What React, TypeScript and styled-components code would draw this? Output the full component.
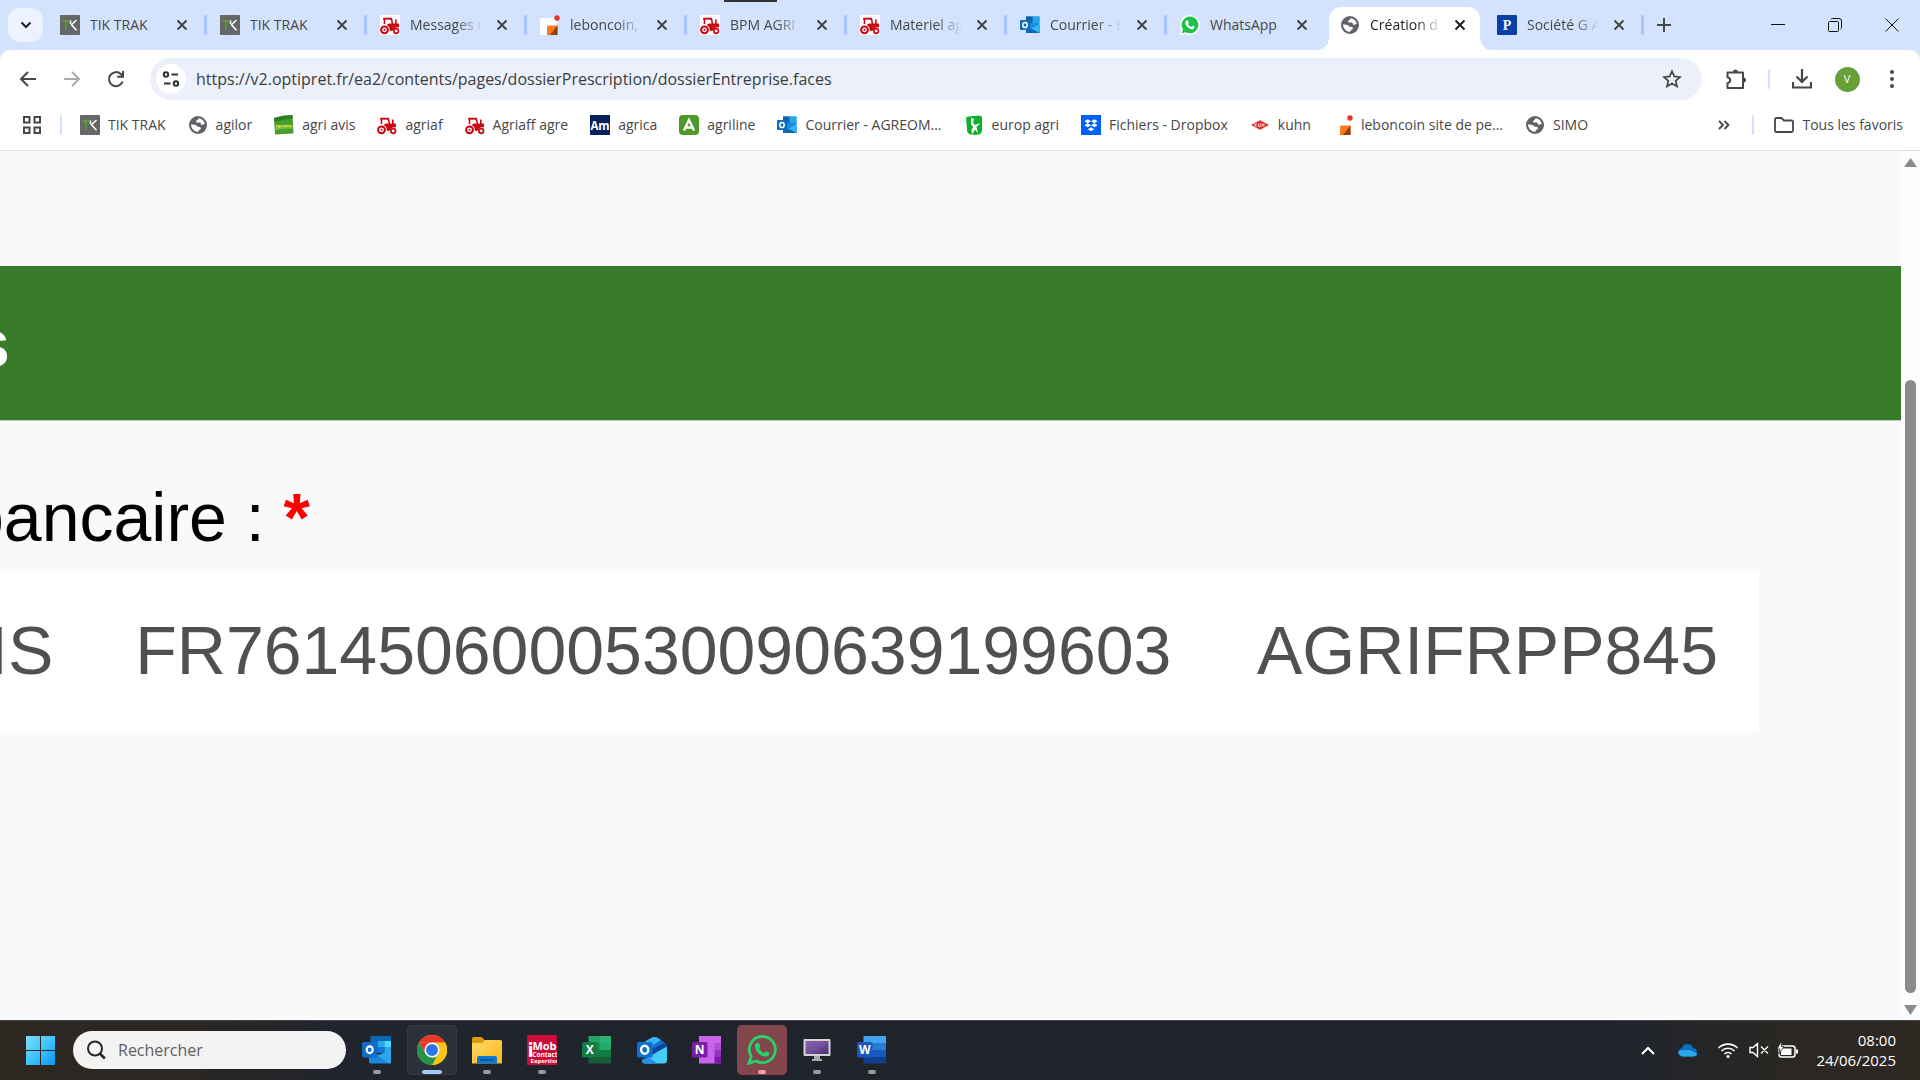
import React from "react";
import styled, { createGlobalStyle, css } from "styled-components";

const uiFont = `"Segoe UI", "Open Sans", "Noto Sans", sans-serif`;
const pageFont = `"Liberation Sans", Arial, sans-serif`;

const GlobalStyle = createGlobalStyle`
  *, *::before, *::after { box-sizing: border-box; }
  body { margin: 0; background: #d3e3fd; overflow: hidden; }
  button, input { font: inherit; color: inherit; border: 0; margin: 0; padding: 0; background: none; }
  svg { display: block; flex: none; }
`;

const Screen = styled.div`
  display: flex;
  flex-direction: column;
  min-height: 100vh;
  font-family: ${uiFont};
  font-size: 14px;
  line-height: 20px;
  color: #474747;
`;

/* ---------- Tab strip ---------- */

const TabStrip = styled.header`
  position: relative;
  display: flex;
  align-items: center;
  height: 50px;
  padding-left: 8px;
  background: #d3e3fd;
`;

const TopHandle = styled.div`
  position: absolute;
  top: 0;
  left: 724px;
  width: 53px;
  height: 2px;
  background: #333;
`;

const TabSearch = styled.button`
  display: grid;
  place-items: center;
  flex: none;
  width: 35px;
  height: 34px;
  margin-right: 4px;
  border-radius: 12px;
  background: #ecf2fe;
  color: #1f1f1f;
`;

const TabList = styled.nav`
  display: flex;
  align-items: flex-end;
  align-self: stretch;
  min-width: 0;
`;

const Tab = styled.div<{ $active?: boolean }>`
  position: relative;
  display: flex;
  align-items: center;
  flex: 0 1 160px;
  width: 160px;
  height: 50px;
  padding-left: 13px;

  ${(p) =>
    p.$active &&
    css`
      flex-basis: 151px;
      width: 151px;
      height: 43px;
      margin: 0 4px 0 2px;
      padding: 0 10px 7px 11px;
      border-radius: 12px 12px 0 0;
      background: #fff;
      color: #1f1f1f;

      &::before,
      &::after {
        content: "";
        position: absolute;
        bottom: 0;
        width: 12px;
        height: 12px;
      }
      &::before {
        right: 100%;
        background: radial-gradient(circle at 0 0, #d3e3fd 12px, #fff 12px);
      }
      &::after {
        left: 100%;
        background: radial-gradient(circle at 100% 0, #d3e3fd 12px, #fff 12px);
      }
    `}
`;

const TabTitle = styled.a<{ $fade?: boolean }>`
  flex: 0 0 72px;
  margin-left: 10px;
  overflow: hidden;
  white-space: nowrap;
  color: inherit;
  text-decoration: none;
  ${(p) =>
    p.$fade &&
    css`
      mask-image: linear-gradient(to right, #000 64%, transparent);
    `}
`;

const TabClose = styled.button`
  display: grid;
  place-items: center;
  flex: none;
  width: 20px;
  height: 20px;
  margin-left: auto;
`;

const Divider = styled.span<{ $color?: string; $gap?: number }>`
  flex: none;
  width: 2px;
  height: 20px;
  margin: 0 ${(p) => p.$gap ?? 0}px;
  border-radius: 1px;
  background: ${(p) => p.$color ?? "#a8c7fa"};
`;

const TabDivider = styled(Divider)`
  width: 3px;
  margin-left: 12px;
`;

const IconButton = styled.button<{ $w?: number; $color?: string }>`
  display: grid;
  place-items: center;
  flex: none;
  width: ${(p) => p.$w ?? 44}px;
  height: 42px;
  color: ${(p) => p.$color ?? "#474747"};
`;

const WindowControls = styled.div`
  display: flex;
  margin-left: auto;
`;

/* ---------- Toolbar ---------- */

const Toolbar = styled.div`
  display: flex;
  align-items: center;
  height: 50px;
  padding: 8px 6px 0;
  border-radius: 10px 10px 0 0;
  background: #fff;
`;

const Omnibox = styled.div`
  display: flex;
  align-items: center;
  flex: 1;
  height: 42px;
  margin: 0 12px;
  padding: 0 8px 0 6px;
  border-radius: 21px;
  background: #ebf0fa;
`;

const SiteInfo = styled.button`
  display: grid;
  place-items: center;
  flex: none;
  width: 30px;
  height: 30px;
  border-radius: 50%;
  background: #fff;
`;

const UrlInput = styled.input`
  flex: 1;
  min-width: 0;
  margin-left: 10px;
  font-size: 16px;
  line-height: 24px;
  color: #3c3d40;
  outline: 0;
`;

const Avatar = styled.span`
  display: grid;
  place-items: center;
  width: 25px;
  height: 25px;
  border-radius: 50%;
  background: #689f38;
  color: #fff;
  font-size: 11px;
  line-height: 16px;
`;

/* ---------- Bookmarks ---------- */

const BookmarkBar = styled.nav`
  display: flex;
  align-items: center;
  height: 51px;
  padding: 0 17px 0 10px;
  border-bottom: 1px solid #dcdcdc;
  background: #fff;
`;

const BookmarkList = styled.div`
  display: flex;
  gap: 22px;
  min-width: 0;
  padding-left: 12px;
`;

const Bookmark = styled.a`
  display: flex;
  align-items: center;
  gap: 8px;
  flex: none;
  color: #474747;
  text-decoration: none;
  white-space: nowrap;
`;

const BookmarkEnd = styled.div`
  display: flex;
  align-items: center;
  margin-left: auto;
`;

/* ---------- Page ---------- */

const Viewport = styled.div`
  display: flex;
  flex: 1;
  background: #f9f9f9;
`;

const Clip = styled.main`
  flex: 1;
  min-width: 0;
  overflow: hidden;
  font-family: ${pageFont};
  font-size: 68px;
  line-height: 76px;
`;

/* The page is scrolled to the right, so its left edge lies outside the view. */
const Sheet = styled.div`
  margin-left: -52px;
  padding-top: 115px;
`;

const Band = styled.h1`
  margin: 0;
  padding: 39px 24px;
  border-bottom: 1px solid #b9d2b4;
  background: #387c2b;
  color: #fff;
  font-size: inherit;
  font-weight: 700;
`;

const FieldTitle = styled.h2`
  margin: 0;
  padding: 58px 18px 16px;
  color: #000;
  font-size: inherit;
  font-weight: 400;
`;

const Required = styled.span`
  color: #f00;
  font-weight: 700;
`;

const TableWrap = styled.div`
  padding-right: 142px;
`;

const Table = styled.table`
  width: 100%;
  border-collapse: collapse;
  background: #fff;
  color: #505050;
`;

const Cell = styled.td<{ $fill?: boolean }>`
  width: ${(p) => (p.$fill ? "100%" : "auto")};
  padding: 41px 41px 44px;
  white-space: nowrap;
`;

const Scrollbar = styled.div`
  display: flex;
  flex-direction: column;
  align-items: center;
  flex: none;
  width: 19px;
  padding: 7px 0 5px;
  background: #fcfcfc;
`;

const ScrollTrack = styled.div`
  display: flex;
  flex-direction: column;
  flex: 1;
  width: 11px;
  padding: 4px 0 12px;
`;

const ScrollLead = styled.div`
  flex: 209;
`;

const ScrollThumb = styled.div`
  flex: 613;
  border-radius: 6px;
  background: #8b8b8b;
`;

/* ---------- Taskbar ---------- */

const Taskbar = styled.footer`
  display: flex;
  align-items: center;
  height: 60px;
  padding: 0 24px 1px 15px;
  border-top: 1px solid #45474a;
  background: linear-gradient(to right, #2e2721, #2a2724 10%, #20242d 18%, #1f242b 50%, #1e232d 83%, #292724 92%, #2e2722);
`;

const StartButton = styled.button`
  display: grid;
  place-items: center;
  width: 50px;
  height: 50px;
`;

const SearchBox = styled.label`
  display: flex;
  align-items: center;
  gap: 12px;
  width: 273px;
  height: 38px;
  margin: 0 6px 0 8px;
  padding-left: 14px;
  border-radius: 19px;
  background: #f3f3f3;
`;

const SearchInput = styled.input`
  flex: 1;
  min-width: 0;
  font-size: 16px;
  line-height: 24px;
  outline: 0;
  &::placeholder {
    color: #606060;
    opacity: 1;
  }
`;

const Apps = styled.div`
  display: flex;
  gap: 5px;
`;

const AppButton = styled.button<{ $state?: "focus" | "alert" }>`
  position: relative;
  display: grid;
  place-items: center;
  width: 50px;
  height: 50px;
  border-radius: 5px;
  background: ${(p) => (p.$state === "focus" ? "#2c3039" : p.$state === "alert" ? "#83464d" : "none")};
  box-shadow: ${(p) => (p.$state === "focus" ? "inset 0 0 0 1px #383b43" : "none")};
`;

const RunMark = styled.span<{ $state?: "focus" | "alert" }>`
  position: absolute;
  bottom: 1px;
  left: 50%;
  width: ${(p) => (p.$state === "focus" ? 20 : 8)}px;
  height: 4px;
  border-radius: 2px;
  transform: translateX(-50%);
  background: ${(p) => (p.$state === "focus" ? "#a3cbf8" : p.$state === "alert" ? "#ff99a4" : "#9a9b9e")};
`;

const Tray = styled.div`
  display: flex;
  align-items: center;
  margin-left: auto;
  color: #fff;
`;

const TrayButton = styled.button<{ $w: number }>`
  display: grid;
  place-items: center;
  width: ${(p) => p.$w}px;
  height: 40px;
`;

const Clock = styled.time`
  min-width: 90px;
  text-align: right;
  font-size: 15px;
  line-height: 20px;
`;

/* ---------- Icons ---------- */

const fav = { width: 20, height: 20, viewBox: "0 0 20 20" };
const task = { width: 30, height: 30, viewBox: "0 0 30 30" };
const label = { fontFamily: "Open Sans, sans-serif", fontWeight: 700, fill: "#fff", textAnchor: "middle" as const };

const TikTrak = () => (
  <svg {...fav}>
    <rect width="20" height="20" rx="1" fill="#666" />
    <path d="M2.500 6h7M6 6v9" stroke="#4caf2a" strokeWidth="1.500" fill="none" />
    <path d="M10.500 5.500v3.500M16.500 5l-5 4.800 5 5.400" stroke="#fff" strokeWidth="1.500" fill="none" />
  </svg>
);

const Globe = () => (
  <svg {...fav}>
    <circle cx="10" cy="10" r="9" fill="#5f6368" />
    <path d="M10.500 3.200c3.300.3 5.800 2.700 6.300 5.600l-2.300.9c-.8.300-1.500-.1-1.700-.8l-.4-1.400H8.800c-.8 0-1.200-.9-.6-1.500l1.600-1.300z" fill="#fff" />
    <path d="M3.100 9.200l4.400.9c1.200.2 1.500 1.600 2.600 1.700l1.800.2c1.300.2 1.400 1.900.3 2.400l-1.300.7-.6 1.700c-3.900 0-7.400-3.400-7.200-7.600z" fill="#fff" />
  </svg>
);

const Tractor = ({ plate }: { plate?: boolean }) => (
  <svg {...fav}>
    {plate && <rect width="20" height="20" fill="#fff" />}
    <g fill="none" stroke="#cc0610">
      <path d="M4.500 9V3.500h6.800l1.200 5.300" strokeWidth="1.600" />
      <circle cx="4.500" cy="14.800" r="3.400" strokeWidth="2" />
      <circle cx="16.200" cy="16" r="2.300" strokeWidth="1.700" />
    </g>
    <path d="M9 8.500h9.200c.6 0 .8.400.8.900v3.200c-3-1-5.600.4-6.200 3.200H9.700c.3-2.700-.8-4.800-3.200-5.700zM15 4.500h1.600v4H15zM3 3h9v1.600H3z" fill="#cc0610" />
    <circle cx="4.500" cy="14.800" r="1" fill="#cc0610" />
  </svg>
);

const Leboncoin = ({ plate }: { plate?: boolean }) => (
  <svg {...fav}>
    {plate && <path d="M0 3h14l3 3v14H0z" fill="#fff" />}
    <path d="M8 10.500h9.500V20H7v-8.500z" fill="#ff7a1a" />
    <path d="M17.500 10.500V20H10z" fill="#8f3d0a" />
    <circle cx="17" cy="3" r="2.700" fill="#e23325" />
  </svg>
);

const OutlookFav = () => (
  <svg {...fav}>
    <path d="M6 1.500h13.500V18H6z" fill="#1490df" />
    <path d="M6 1.500h6.700V8H6z" fill="#0a64ad" />
    <path d="M12.700 1.500h6.800V8h-6.800z" fill="#28a8ea" />
    <path d="M6 18h13.500v-7l-6.700 4L6 11z" fill="#1066b5" />
    <path d="M19.500 9v9l-8-4.500z" fill="#35b8f1" />
    <rect y="5" width="10" height="10" rx="1" fill="#0f6cbd" />
    <ellipse cx="5" cy="10" rx="2.200" ry="2.600" fill="none" stroke="#fff" strokeWidth="1.500" />
  </svg>
);

const WhatsAppFav = () => (
  <svg {...fav}>
    <path d="M10 0a10 10 0 0 1 0 20c-1.700 0-3.300-.4-4.700-1.200L0 20l1.300-5A10 10 0 0 1 10 0z" fill="#fff" />
    <path d="M10.100 1.500a8.400 8.400 0 1 1-4.300 15.700L1.800 18.300 3 14.400A8.400 8.400 0 0 1 10.100 1.500z" fill="#1fbf4b" />
    <path d="M7.200 5.300c.5 0 .7.100.9.600l.7 1.600c.1.500-.7 1.200-.8 1.500.7 1.400 1.700 2.300 3.200 2.900.4-.2 1-1.200 1.400-1.100l1.900 1c.2.300 0 1.900-1.500 2.400-3.400.8-7.700-3.400-7.700-6.600 0-1.200.8-2.200 1.900-2.300z" fill="#fff" />
  </svg>
);

const PFav = () => (
  <svg {...fav}>
    <rect width="20" height="20" rx="1" fill="#0b3fa8" />
    <text x="10" y="15" {...label} fontFamily="Liberation Serif, serif" fontSize="14">P</text>
  </svg>
);

const AgriAvis = () => (
  <svg {...fav}>
    <path d="M0 3Q9 0 18.500 0L19.500 18.500 1 19.500z" fill="#4a9e2e" />
    <path d="M0 3Q9 0 18.500 0l.3 3.500Q9 4 .3 7z" fill="#2f7d22" />
    <path d="M.7 12.500q9-2.500 18.500-2v3q-9-.5-18.400 1.800z" fill="#74be4a" />
    <text x="9.500" y="11.500" {...label} fill="#f4e43a" fontSize="4">agriavis</text>
  </svg>
);

const Am = () => (
  <svg {...fav}>
    <rect width="20" height="20" fill="#06215c" />
    <text x="10" y="14.500" {...label} fontSize="11.500">Am</text>
  </svg>
);

const Agriline = () => (
  <svg {...fav}>
    <rect width="20" height="20" rx="4" fill="#4d9a2a" />
    <path d="M5 15.500L10 5l5 10.500M7.200 12.500h5.600" stroke="#fff" strokeWidth="2.300" fill="none" />
  </svg>
);

const Europ = () => (
  <svg {...fav}>
    <path d="M2 2.500Q6 .5 16 .8q2 .2 2 2v12q0 5-5 5H8q-5-.5-5-5z" fill="#0fb12c" />
    <path d="M7 3l3 1-1 3.500 2 2.500 5.500-2-4 4 1.500 6.500-3-4-3 5-.5-4L9 12 7 9z" fill="#fff" />
  </svg>
);

const Dropbox = () => (
  <svg {...fav}>
    <rect width="20" height="20" fill="#0061fe" />
    <path d="M6.700 4.300l3.300 2-3.300 2-3.300-2zM13.300 4.300l3.300 2-3.300 2-3.300-2zM6.700 8.300l3.300 2-3.300 2-3.300-2zM13.300 8.300l3.300 2-3.300 2-3.300-2zM10 12.200l3.200 2-3.200 2-3.200-2z" fill="#fff" />
  </svg>
);

const Kuhn = () => (
  <svg {...fav}>
    <path d="M1 10l9-4.800L19 10l-9 4.800z" fill="#e02b2b" />
    <path d="M5 8.500v3M5 10l2-1.500M5 10l2 1.500M8.500 8.500v3h1.800v-3M12 8.500v3M12 10h2M14 8.500v3" stroke="#fff" strokeWidth=".7" fill="none" />
  </svg>
);

const CloseGlyph = () => (
  <svg width="12" height="12" viewBox="0 0 12 12">
    <path d="M1.500 1.500l9 9M10.500 1.500l-9 9" stroke="currentColor" strokeWidth="2" fill="none" />
  </svg>
);

const line = (w: number, h: number, d: string, sw = 2) => (
  <svg width={w} height={h} viewBox={`0 0 ${w} ${h}`}>
    <path d={d} fill="none" stroke="currentColor" strokeWidth={sw} />
  </svg>
);

const SiteGlyph = () => (
  <svg width="18" height="18" viewBox="0 0 18 18" fill="none" stroke="#303134" strokeWidth="2">
    <circle cx="4" cy="4.500" r="2.200" />
    <path d="M9.500 4.500H16M2 13.500h6.500" />
    <circle cx="14" cy="13.500" r="2.200" />
  </svg>
);

const Puzzle = () => (
  <svg width="24" height="24" viewBox="0 0 24 24">
    <path d="M3.500 5.500h15.500v15.500H3.500v-4.800c3.600-.9 3.600-5 0-5.900z" fill="none" stroke="currentColor" strokeWidth="2" strokeLinejoin="round" />
    <path d="M9 5a2.500 2.500 0 0 1 5 0zM19.500 10.500a2.500 2.500 0 0 1 0 5z" fill="currentColor" />
  </svg>
);

const Dots = () => (
  <svg width="6" height="20" viewBox="0 0 6 20" fill="currentColor">
    <circle cx="3" cy="3" r="2" />
    <circle cx="3" cy="10" r="2" />
    <circle cx="3" cy="17" r="2" />
  </svg>
);

const GridGlyph = () => (
  <svg width="18" height="18" viewBox="0 0 18 18" fill="none" stroke="currentColor" strokeWidth="2">
    <path d="M1 1h5.500v5.500H1zM11.500 1H17v5.500h-5.500zM1 11.500h5.500V17H1zM11.500 11.500H17V17h-5.500z" />
  </svg>
);

const StartLogo = () => (
  <svg {...task}>
    <defs>
      <linearGradient id="start" x1="0" y1="0" x2="1" y2="1">
        <stop offset="0" stopColor="#7fdcff" />
        <stop offset=".5" stopColor="#3fc4fb" />
        <stop offset="1" stopColor="#0a94fb" />
      </linearGradient>
    </defs>
    <path d="M1 1h14v14H1zM16 1h14v14H16zM1 16h14v14H1zM16 16h14v14H16z" fill="url(#start)" />
  </svg>
);

const Chip = ({ fill, letter }: { fill: string; letter: string }) => (
  <>
    <rect x="0" y="7" width="15.500" height="15.500" rx="1.500" fill={fill} />
    <text x="7.700" y="19" {...label} fontSize="12">{letter}</text>
  </>
);

const OutlookTask = () => (
  <svg {...task}>
    <path d="M8.500 1H29v14H8.500z" fill="#0a68b5" />
    <path d="M15.500 6h7v6h-7z" fill="#28a8ea" />
    <path d="M22.500 6H29v6h-6.500z" fill="#50d9ff" />
    <path d="M15.500 12h7v6h-7z" fill="#0f78d4" />
    <path d="M22.500 12H29v6h-6.500z" fill="#28a8ea" />
    <path d="M7 14l11 7 11-6v12q0 1.500-1.500 1.500h-19Q7 28.500 7 27z" fill="#1a86dc" />
    <path d="M29 15v12q0 1.500-1.500 1.500L15 20.500z" fill="#2ea5ea" />
    <rect x="0" y="7" width="15.500" height="15.500" rx="1.500" fill="#0f6cc8" />
    <ellipse cx="7.700" cy="14.700" rx="3" ry="3.400" fill="none" stroke="#fff" strokeWidth="2.200" />
  </svg>
);

const ChromeTask = () => (
  <svg {...task}>
    <circle cx="15" cy="15" r="15" fill="#fcc419" />
    <path d="M2 7.500h26L15 15l-6.500 3.700z" fill="#e6382b" />
    <path d="M2 7.500A15 15 0 0 1 28 7.500z" fill="#e6382b" />
    <path d="M2 7.500l6.500 11.200L15 22.500h6.500L15 30A15 15 0 0 1 2 7.500z" fill="#25934a" />
    <path d="M15 7.500h13.200A15 15 0 0 1 15 30l6.500-11.200z" fill="#fcc419" />
    <circle cx="15" cy="15" r="7.500" fill="#fff" />
    <circle cx="15" cy="15" r="6" fill="#2b78ea" />
  </svg>
);

const FolderTask = () => (
  <svg {...task}>
    <defs>
      <linearGradient id="folder" x1="0" y1="0" x2="1" y2="1">
        <stop offset="0" stopColor="#ffd970" />
        <stop offset="1" stopColor="#fdb813" />
      </linearGradient>
    </defs>
    <path d="M0 3.500Q0 2 1.500 2h8L12.500 5H28v5H0z" fill="#dc9b08" />
    <path d="M0 8h10l3-3h15.500Q30 5 30 6.500v22H0z" fill="url(#folder)" />
    <path d="M5 28.500V23q0-2 2-2h16q2 0 2 2v5.500z" fill="#0f78d0" />
    <path d="M8 25h14" stroke="#0a4f94" strokeWidth="1.500" />
  </svg>
);

const MobTask = () => (
  <svg {...task}>
    <rect width="30" height="30" fill="#ce0a38" />
    <text x="17.500" y="14.500" {...label} fontSize="11">Mob</text>
    <text x="3.500" y="22" {...label} fontSize="20">i</text>
    <text x="18" y="21.500" {...label} fontSize="6.500">Contact</text>
    <text x="17.500" y="28" {...label} fontSize="6">Expertise</text>
  </svg>
);

const Office = ({ c, chip, letter }: { c: string[]; chip: string; letter: string }) => (
  <svg {...task}>
    <path d="M6.500 1H29v7H6.500z" fill={c[0]} />
    <path d="M6.500 8H29v7H6.500z" fill={c[1]} />
    <path d="M6.500 15H29v7H6.500z" fill={c[2]} />
    <path d="M6.500 22H29v6.500H6.500z" fill={c[3]} />
    {letter === "X" && <path d="M18 1h11v7H18zM18 8h11v7H18z" fill="#33c481" opacity=".5" />}
    <Chip fill={chip} letter={letter} />
  </svg>
);

const OneNoteTask = () => (
  <svg {...task}>
    <path d="M7 1h22v27.500H7z" fill="#c965ea" />
    <path d="M22.500 8H29v7h-6.500z" fill="#b04cd8" />
    <path d="M22.500 15H29v7h-6.500z" fill="#9332bf" />
    <path d="M22.500 22H29v6.500h-6.500z" fill="#7719aa" />
    <Chip fill="#7a1fa8" letter="N" />
  </svg>
);

const NewOutlook = () => (
  <svg {...task}>
    <path d="M4 9L15 2.500q2.500-1.200 5 0l8 5.500v9H4z" fill="#1473d0" />
    <path d="M4 9L15 2.500q2.500-1.200 5 0L24 5 8 15z" fill="#3bb3f5" />
    <path d="M28 7.500q2 1.500 2 4L11 22l-2-5z" fill="#0c459c" />
    <path d="M30 11.500V25q0 3.500-3.500 3.500H8Q5 28.500 5 25l6-3z" fill="#43cdf8" />
    <path d="M8 28.500q-3 0-3-3.500l6-3 10 6.500z" fill="#2490e8" />
    <rect x="0" y="7" width="15.500" height="15.500" rx="1.500" fill="#0f6fce" />
    <ellipse cx="7.700" cy="14.700" rx="3.600" ry="4" fill="none" stroke="#fff" strokeWidth="2.400" />
  </svg>
);

const WhatsAppTask = () => (
  <svg {...task}>
    <path d="M15.500 1.500a13 13 0 1 1-6.400 24.400L2 28.300l2.300-6.900A13 13 0 0 1 15.500 1.500z" fill="none" stroke="#27d366" strokeWidth="2.800" />
    <path d="M11 7.800c.7 0 1 .2 1.200.8l1.100 2.600c.2.700-1.100 1.800-1.200 2.300 1.100 2.200 2.700 3.500 5 4.600.7-.3 1.600-2 2.200-1.900l3 1.500c.3.600 0 3-2.400 3.800-5.300 1.300-12-5.200-12-10.200 0-1.900 1.300-3.500 3.100-3.500z" fill="#27d366" />
  </svg>
);

const MonitorTask = () => (
  <svg {...task}>
    <defs>
      <linearGradient id="screen" x1="0" y1="0" x2="1" y2="1">
        <stop offset="0" stopColor="#8465ad" />
        <stop offset=".5" stopColor="#72519c" />
        <stop offset="1" stopColor="#4a2c72" />
      </linearGradient>
    </defs>
    <rect x="1.500" y="4" width="27" height="17" rx="1" fill="#d3d3d3" />
    <path d="M3.500 6h23v13h-23z" fill="url(#screen)" />
    <path d="M12 21h6v3h2v2H10v-2h2z" fill="#a9a9a9" />
  </svg>
);

const Cloud = () => (
  <svg width="20" height="14" viewBox="0 0 20 14">
    <path d="M4.500 13.500a4.300 4.300 0 0 1-.7-8.400A6 6 0 0 1 15 4.700a4.500 4.500 0 0 1 .5 8.800z" fill="#0f6cc0" />
    <path d="M4.500 13.500a4.300 4.300 0 0 1-3.800-6L12 7l7.500 4a4.400 4.400 0 0 1-4 2.500z" fill="#28a8ea" />
  </svg>
);

const Wifi = () => (
  <svg width="22" height="18" viewBox="0 0 22 18" fill="none" stroke="#fff" strokeWidth="1.600">
    <path d="M1.500 7a13.500 13.500 0 0 1 19 0M4.500 10a9.200 9.200 0 0 1 13 0M7.500 13a5 5 0 0 1 7 0" />
    <circle cx="11" cy="15.500" r="1.500" fill="#fff" stroke="none" />
  </svg>
);

const Mute = () => (
  <svg width="20" height="16" viewBox="0 0 20 16" fill="none" stroke="#fff" strokeWidth="1.400">
    <path d="M1 5.500h3L8.500 1.500v13L4 10.500H1zM12 4.500l7 7M19 4.500l-7 7" />
  </svg>
);

const Battery = () => (
  <svg width="22" height="18" viewBox="0 0 22 18">
    <rect x="2" y="5" width="16" height="11" rx="2.500" fill="none" stroke="#fff" strokeWidth="1.500" />
    <path d="M4 7.500h10.500v6.500H4zM19 8.500h2v4h-2z" fill="#fff" />
    <path d="M4.500 0L0 8h3l-1.500 5L7 5.500H4.500z" fill="#fff" stroke="#292725" strokeWidth=".8" />
  </svg>
);

/* ---------- Data ---------- */

type TabItem = { title: string; icon: React.ReactNode; fade?: boolean; active?: boolean };

const tabs: TabItem[] = [
  { title: "TIK TRAK", icon: <TikTrak /> },
  { title: "TIK TRAK", icon: <TikTrak /> },
  { title: "Messages r", icon: <Tractor plate />, fade: true },
  { title: "leboncoin,", icon: <Leboncoin plate />, fade: true },
  { title: "BPM AGRI", icon: <Tractor plate />, fade: true },
  { title: "Materiel ag", icon: <Tractor plate />, fade: true },
  { title: "Courrier - B", icon: <OutlookFav />, fade: true },
  { title: "WhatsApp", icon: <WhatsAppFav /> },
  { title: "Création d", icon: <Globe />, fade: true, active: true },
  { title: "Société G A", icon: <PFav />, fade: true },
];

const bookmarks: [string, React.ReactNode][] = [
  ["TIK TRAK", <TikTrak />],
  ["agilor", <Globe />],
  ["agri avis", <AgriAvis />],
  ["agriaf", <Tractor />],
  ["Agriaff agre", <Tractor />],
  ["agrica", <Am />],
  ["agriline", <Agriline />],
  ["Courrier - AGREOM...", <OutlookFav />],
  ["europ agri", <Europ />],
  ["Fichiers - Dropbox", <Dropbox />],
  ["kuhn", <Kuhn />],
  ["leboncoin site de pe...", <Leboncoin />],
  ["SIMO", <Globe />],
];

type AppItem = { name: string; icon: React.ReactNode; running?: boolean; state?: "focus" | "alert" };

const apps: AppItem[] = [
  { name: "Outlook", icon: <OutlookTask />, running: true },
  { name: "Chrome", icon: <ChromeTask />, running: true, state: "focus" },
  { name: "Explorateur", icon: <FolderTask />, running: true },
  { name: "iMob", icon: <MobTask />, running: true },
  { name: "Excel", icon: <Office c={["#21a366", "#159152", "#107c41", "#185c37"]} chip="#107c41" letter="X" /> },
  { name: "Outlook (new)", icon: <NewOutlook /> },
  { name: "OneNote", icon: <OneNoteTask /> },
  { name: "WhatsApp", icon: <WhatsAppTask />, running: true, state: "alert" },
  { name: "Bureau à distance", icon: <MonitorTask />, running: true },
  { name: "Word", icon: <Office c={["#41a5ee", "#2b7cd3", "#185abd", "#103f91"]} chip="#185abd" letter="W" />, running: true },
];

export default function App() {
  return (
    <Screen>
      <GlobalStyle />
      <TabStrip>
        <TopHandle />
        <TabSearch aria-label="Rechercher dans les onglets">{line(12, 8, "M1.500 1.500L6 6l4.500-4.500", 2)}</TabSearch>
        <TabList>
          {tabs.map((t, i) => (
            <Tab key={i} $active={t.active}>
              {t.icon}
              <TabTitle href="#" $fade={t.fade}>{t.title}</TabTitle>
              <TabClose aria-label="Fermer l'onglet"><CloseGlyph /></TabClose>
              {!t.active && <TabDivider $color={tabs[i + 1]?.active ? "transparent" : undefined} />}
            </Tab>
          ))}
        </TabList>
        <IconButton $w={40} aria-label="Nouvel onglet">{line(14, 14, "M7 0v14M0 7h14", 2)}</IconButton>
        <WindowControls>
          <IconButton $w={57} $color="#111" aria-label="Réduire">{line(14, 14, "M0 6.500h14", 1)}</IconButton>
          <IconButton $w={57} $color="#111" aria-label="Restaurer">
            {line(14, 14, "M.5 4.500q0-1 1-1h8q1 0 1 1v8q0 1-1 1h-8q-1 0-1-1zM3 1.500q.5-1 1.500-1H11q2.500 0 2.500 2.500v6.500q0 1-1 1.500", 1)}
          </IconButton>
          <IconButton $w={57} $color="#111" aria-label="Fermer">{line(14, 14, "M.5.5l13 13M13.500.5l-13 13", 1)}</IconButton>
        </WindowControls>
      </TabStrip>

      <Toolbar>
        <IconButton aria-label="Retour">{line(18, 16, "M17 8H2M9 1L2 8l7 7")}</IconButton>
        <IconButton $color="#ababab" aria-label="Avancer">{line(18, 16, "M1 8h15M9 1l7 7-7 7")}</IconButton>
        <IconButton aria-label="Actualiser">{line(18, 18, "M15.600 11.500a7 7 0 1 1-1.600-7.300l2 2.300M16 1v5.700h-5.800")}</IconButton>
        <Omnibox>
          <SiteInfo aria-label="Informations sur le site"><SiteGlyph /></SiteInfo>
          <UrlInput
            aria-label="Adresse"
            defaultValue="https://v2.optipret.fr/ea2/contents/pages/dossierPrescription/dossierEntreprise.faces"
          />
          <IconButton aria-label="Ajouter aux favoris">
            {line(20, 20, "M10 2.300l2.300 5.200 5.700.6-4.300 3.800 1.300 5.600-5-3-5 3 1.300-5.600L2 8.100l5.700-.6z", 1.8)}
          </IconButton>
        </Omnibox>
        <IconButton aria-label="Extensions"><Puzzle /></IconButton>
        <Divider $color="#d3e3fd" $gap={10} />
        <IconButton aria-label="Téléchargements">{line(20, 20, "M10 0v12.500M4.500 7.500L10 13l5.500-5.500M1 13v5.500h18V13", 2.2)}</IconButton>
        <IconButton $w={46} aria-label="Profil"><Avatar>V</Avatar></IconButton>
        <IconButton aria-label="Menu"><Dots /></IconButton>
      </Toolbar>

      <BookmarkBar>
        <IconButton aria-label="Applications"><GridGlyph /></IconButton>
        <Divider $color="#d3e3fd" $gap={6} />
        <BookmarkList>
          {bookmarks.map(([name, icon], i) => (
            <Bookmark href="#" key={i}>
              {icon}
              {name}
            </Bookmark>
          ))}
        </BookmarkList>
        <BookmarkEnd>
          <IconButton aria-label="Autres favoris">{line(12, 10, "M1 1l4 4-4 4M6.500 1l4 4-4 4", 1.8)}</IconButton>
          <Divider $color="#d3e3fd" $gap={6} />
          <IconButton as="span" $w={14} />
          <Bookmark href="#">
            {line(20, 16, "M1 2.500Q1 1 2.500 1h5L10 3.500h7.500Q19 3.500 19 5v8.500q0 1.500-1.500 1.500h-15Q1 15 1 13.500z", 1.8)}
            Tous les favoris
          </Bookmark>
        </BookmarkEnd>
      </BookmarkBar>

      <Viewport>
        <Clip>
          <Sheet>
            <Band>s</Band>
            <FieldTitle>
              bancaire : <Required>*</Required>
            </FieldTitle>
            <TableWrap>
              <Table>
                <tbody>
                  <tr>
                    <Cell>IS</Cell>
                    <Cell $fill>FR7614506000530090639199603</Cell>
                    <Cell>AGRIFRPP845</Cell>
                  </tr>
                </tbody>
              </Table>
            </TableWrap>
          </Sheet>
        </Clip>
        <Scrollbar aria-hidden="true">
          <svg width="13" height="9" viewBox="0 0 13 9"><path d="M6.500 0L13 9H0z" fill="#8b8b8b" /></svg>
          <ScrollTrack>
            <ScrollLead />
            <ScrollThumb />
          </ScrollTrack>
          <svg width="13" height="10" viewBox="0 0 13 10"><path d="M0 0h13L6.500 10z" fill="#8b8b8b" /></svg>
        </Scrollbar>
      </Viewport>

      <Taskbar>
        <StartButton aria-label="Démarrer"><StartLogo /></StartButton>
        <SearchBox>
          <svg width="19" height="20" viewBox="0 0 19 20" fill="none" stroke="#262626" strokeWidth="2">
            <circle cx="8" cy="8.500" r="7" />
            <path d="M12.800 13.500l5 5" strokeWidth="2.500" />
          </svg>
          <SearchInput aria-label="Rechercher" placeholder="Rechercher" />
        </SearchBox>
        <Apps>
          {apps.map((a) => (
            <AppButton key={a.name} $state={a.state} aria-label={a.name}>
              {a.icon}
              {a.running && <RunMark $state={a.state} />}
            </AppButton>
          ))}
        </Apps>
        <Tray>
          <TrayButton $w={40} aria-label="Icônes cachées">{line(14, 9, "M1 8l6-6 6 6", 2)}</TrayButton>
          <TrayButton $w={40} aria-label="OneDrive"><Cloud /></TrayButton>
          <TrayButton $w={40} aria-label="Wi-Fi"><Wifi /></TrayButton>
          <TrayButton $w={22} aria-label="Son"><Mute /></TrayButton>
          <TrayButton $w={36} aria-label="Batterie"><Battery /></TrayButton>
          <Clock>
            08:00
            <br />
            24/06/2025
          </Clock>
        </Tray>
      </Taskbar>
    </Screen>
  );
}
